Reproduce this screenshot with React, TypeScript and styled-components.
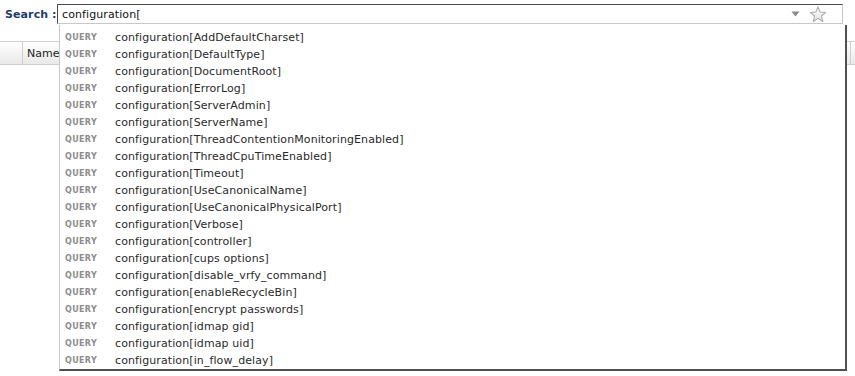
import React from "react";
import styled, { createGlobalStyle } from "styled-components";

const Global = createGlobalStyle`
  html, body { margin: 0; padding: 0; background: #fff; }
  body { font-family: "DejaVu Sans", Verdana, sans-serif; font-size: 11px; color: #222; }
`;

const Page = styled.div`
  width: 855px;
  height: 376px;
  overflow: hidden;
  position: relative;
`;

const SearchRow = styled.div`
  display: flex;
  align-items: center;
  padding: 4px 12px 0 5px;
  gap: 3px;
`;

const Label = styled.label`
  font-weight: bold;
  font-size: 11px;
  color: #1d3c6e;
  white-space: nowrap;
  width: 49px;
  letter-spacing: 0.1px;
`;

const Field = styled.div`
  position: relative;
  flex: 1;
  height: 20px;
  box-sizing: border-box;
  border-top: 1px solid #4a4a4a;
  border-left: 1px solid #4a4a4a;
  border-right: 1px solid #c8c8c8;
  border-bottom: 1px solid #c8c8c8;
  display: flex;
  align-items: center;
  padding: 0 15px 0 4px;
  background: #fff;
`;

const FieldText = styled.span`
  flex: 1;
  font-size: 11px;
  color: #111;
  letter-spacing: 0.1px;
`;

const Icons = styled.div`
  display: flex;
  align-items: center;
  gap: 9px;
`;

const Dropdown = styled.div`
  position: absolute;
  top: 20px;
  left: 1px;
  right: -5px;
  background: #fff;
  border-left: 1px solid #c8c8c8;
  border-right: 2px solid #505050;
  border-bottom: 2px solid #505050;
  padding: 4px 0 0 0;
  z-index: 5;
`;

const Row = styled.div`
  display: flex;
  align-items: center;
  height: 17px;
  padding-left: 5px;
`;

const Kind = styled.span`
  width: 50px;
  font-size: 8px;
  font-weight: bold;
  color: #8c8c8c;
  letter-spacing: 0.35px;
`;

const Value = styled.span`
  font-size: 11px;
  color: #2a2a2a;
  letter-spacing: 0.1px;
`;

const TableHeader = styled.div`
  display: flex;
  margin-top: 17px;
  height: 24px;
  box-sizing: border-box;
  border-top: 1px solid #d0d0d0;
  border-bottom: 1px solid #d0d0d0;
  background: linear-gradient(#ffffff, #e9e9e9);
`;

const HeaderCell = styled.div<{ $w?: number; $grow?: boolean; $last?: boolean }>`
  width: ${(p) => (p.$w ? `${p.$w}px` : "auto")};
  flex: ${(p) => (p.$grow ? 1 : "none")};
  border-right: ${(p) => (p.$last ? "none" : "1px solid #cfcfcf")};
  display: flex;
  align-items: center;
  padding-left: ${(p) => (p.$w ? 0 : 4)}px;
  font-size: 11px;
  color: #222;
  box-sizing: border-box;
`;

const items = [
  "configuration[AddDefaultCharset]",
  "configuration[DefaultType]",
  "configuration[DocumentRoot]",
  "configuration[ErrorLog]",
  "configuration[ServerAdmin]",
  "configuration[ServerName]",
  "configuration[ThreadContentionMonitoringEnabled]",
  "configuration[ThreadCpuTimeEnabled]",
  "configuration[Timeout]",
  "configuration[UseCanonicalName]",
  "configuration[UseCanonicalPhysicalPort]",
  "configuration[Verbose]",
  "configuration[controller]",
  "configuration[cups options]",
  "configuration[disable_vrfy_command]",
  "configuration[enableRecycleBin]",
  "configuration[encrypt passwords]",
  "configuration[idmap gid]",
  "configuration[idmap uid]",
  "configuration[in_flow_delay]",
];

export default function App() {
  return (
    <Page>
      <Global />
      <SearchRow>
        <Label>Search :</Label>
        <Field>
          <FieldText>configuration[</FieldText>
          <Icons>
            <svg width="9" height="6" viewBox="0 0 9 6">
              <path d="M0.5 0.5 L8.5 0.5 L4.5 5.5 Z" fill="#8a8a8a" />
            </svg>
            <svg width="18" height="17" viewBox="0 0 24 23">
              <defs>
                <linearGradient id="sg" x1="0" y1="0" x2="0" y2="1">
                  <stop offset="0" stopColor="#ffffff" />
                  <stop offset="1" stopColor="#e2e2e2" />
                </linearGradient>
              </defs>
              <path
                d="M12 1.2 L14.9 8.2 L22.4 8.7 L16.6 13.5 L18.5 20.9 L12 16.8 L5.5 20.9 L7.4 13.5 L1.6 8.7 L9.1 8.2 Z"
                fill="url(#sg)"
                stroke="#a8a8a8"
                strokeWidth="1.4"
                strokeLinejoin="round"
              />
            </svg>
          </Icons>
          <Dropdown>
            {items.map((t) => (
              <Row key={t}>
                <Kind>QUERY</Kind>
                <Value>{t}</Value>
              </Row>
            ))}
          </Dropdown>
        </Field>
      </SearchRow>
      <TableHeader>
        <HeaderCell $w={23} />
        <HeaderCell $grow>Name</HeaderCell>
        <HeaderCell $w={4} $last />
      </TableHeader>
    </Page>
  );
}
